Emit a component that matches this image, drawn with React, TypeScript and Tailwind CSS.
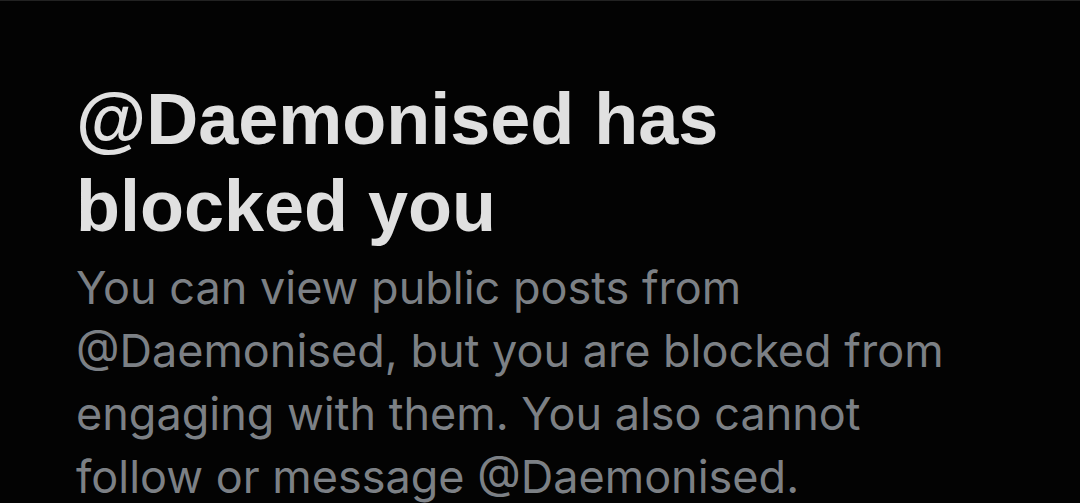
export default function App() {
  return (
    <div className="w-[1080px] h-[503px] overflow-hidden bg-[#030303] border-t border-[#222222]">
      <div className="pl-[76px] pr-[60px] pt-[75px]">
        <h1 className="font-['Liberation_Sans',Arial,sans-serif] font-bold text-[72px] leading-[87px] text-[#e0e0e0]">
          @Daemonised has
          <br />
          blocked you
        </h1>
        <p className="mt-[6px] font-['Inter',sans-serif] text-[45px] leading-[63px] text-[#7c8085]">
          You can view public posts from
          <br />
          @Daemonised, but you are blocked from
          <br />
          engaging with them. You also cannot
          <br />
          follow or message @Daemonised.
        </p>
      </div>
    </div>
  );
}
